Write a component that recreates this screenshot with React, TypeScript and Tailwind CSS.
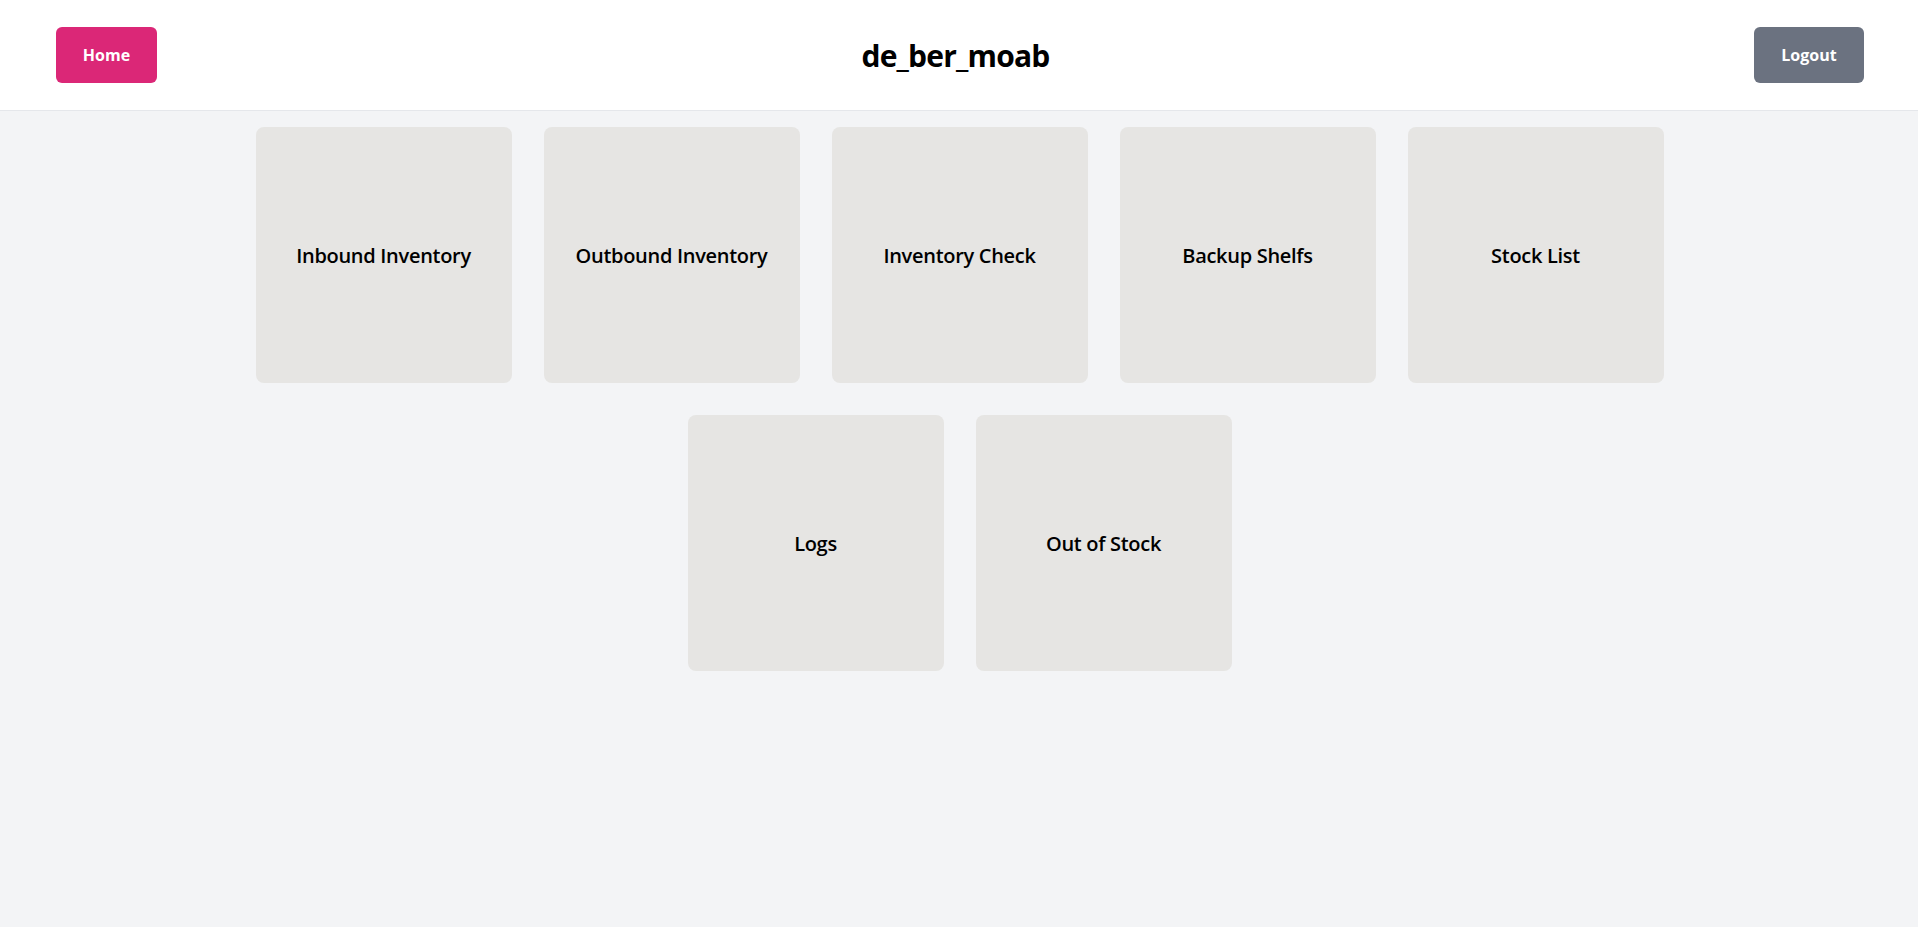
const tiles = [
  "Inbound Inventory",
  "Outbound Inventory",
  "Inventory Check",
  "Backup Shelfs",
  "Stock List",
  "Logs",
  "Out of Stock",
];

const App = () => {
  return (
    <div className="min-h-screen bg-[#f3f4f6] font-['Open_Sans',sans-serif] text-black">
      {/* top bar */}
      <header className="h-[111px] bg-white border-b border-[#e5e7eb] flex items-center justify-between pl-14 pr-[54px]">
        <button className="bg-[#db2777] text-white font-bold text-base rounded-md h-14 w-[101px] cursor-pointer">
          Home
        </button>
        <h1 className="text-3xl font-bold tracking-[-0.8px] pt-0.5">de_ber_moab</h1>
        <button className="bg-[#6b7280] text-white font-bold text-base rounded-md h-14 w-[110px] cursor-pointer">
          Logout
        </button>
      </header>

      <main className="pt-4 pl-px">
        <div className="w-[1408px] mx-auto flex flex-wrap justify-center gap-8">
          {tiles.map((t) => (
            <div
              key={t}
              className="w-64 h-64 bg-[#e6e5e3] rounded-lg flex items-center justify-center pt-0.5 cursor-pointer"
            >
              <span className="text-xl font-semibold tracking-[-0.3px]">{t}</span>
            </div>
          ))}
        </div>
      </main>
    </div>
  );
};

export default App;
